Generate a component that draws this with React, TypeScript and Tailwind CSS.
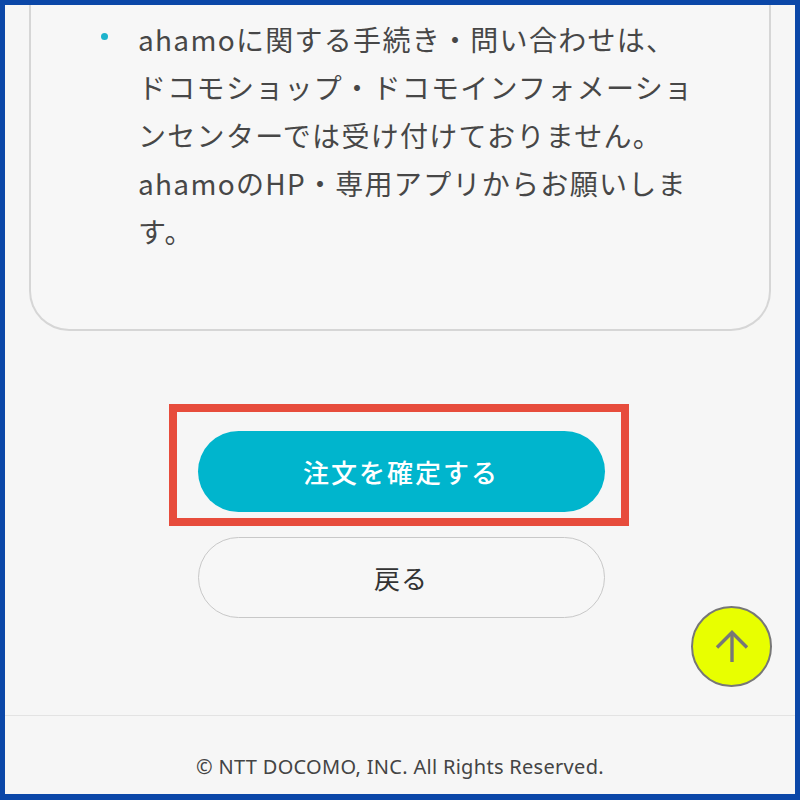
import React from "react";

const jp = { fontFamily: '"Noto Sans CJK JP", "Noto Sans", sans-serif' };

export default function App() {
	return (
		<div className="w-[800px] h-[800px] border-[5px] border-b-[6px] border-[#0b47a8] bg-[#f6f6f6] overflow-hidden relative box-border flex flex-col">
			{/* notice card, top is scrolled out of view */}
			<div className="mx-[24px] border-x-2 border-b-2 border-[#d6d6d6] rounded-b-[40px] bg-[#f7f7f7] pt-[10px] pb-[74px] pl-[70px]">
				<ul style={jp}>
					<li className="flex text-[#474747] text-[28px] leading-[48px] tracking-[1.3px]">
						<span className="w-[37px] shrink-0 flex items-start pt-[18px]">
							<span className="w-[7px] h-[7px] rounded-full bg-[#1cb3cc]" />
						</span>
						<p className="w-[575px]">
							ahamoに関する手続き・問い合わせは、
							<br />
							ドコモショップ・ドコモインフォメーションセンターでは受け付けておりません。
							<br />
							ahamoのHP・専用アプリからお願いします。
						</p>
					</li>
				</ul>
			</div>

			{/* actions */}
			<div className="flex flex-col items-center mt-[100px] pl-[2px]">
				<div className="relative">
					<button
						style={jp}
						className="w-[407px] h-[81px] rounded-full bg-[#00b5cd] text-white text-[26px] font-medium tracking-[2px]"
					>
						注文を確定する
					</button>
					<div className="absolute left-[-29px] right-[-24px] top-[-27px] bottom-[-14px] border-[8px] border-[#e74c3c] pointer-events-none" />
				</div>
				<button
					style={jp}
					className="mt-[25px] w-[407px] h-[81px] rounded-full border border-[#c8c8c8] bg-[#f7f7f7] text-[#333] text-[26px] tracking-[1px]"
				>
					戻る
				</button>
			</div>

			{/* page top button */}
			<button className="absolute left-[686px] top-[601px] w-[81px] h-[81px] rounded-full bg-[#e8ff00] border-2 border-[#777] flex items-center justify-center">
				<svg width="36" height="36" viewBox="0 0 36 36" fill="none" stroke="#777" strokeWidth="3.4">
					<path d="M18 33 V4" />
					<path d="M3 18.5 L18 3.5 L33 18.5" />
				</svg>
			</button>

			{/* footer */}
			<footer className="mt-auto border-t border-[#e3e3e3] h-[79px] flex items-center justify-center pt-[24px]">
				<p
					className="text-[#444] text-[20px] tracking-[0.3px]"
					style={{ fontFamily: '"Noto Sans", "Open Sans", sans-serif' }}
				>
					© NTT DOCOMO, INC. All Rights Reserved.
				</p>
			</footer>
		</div>
	);
}
